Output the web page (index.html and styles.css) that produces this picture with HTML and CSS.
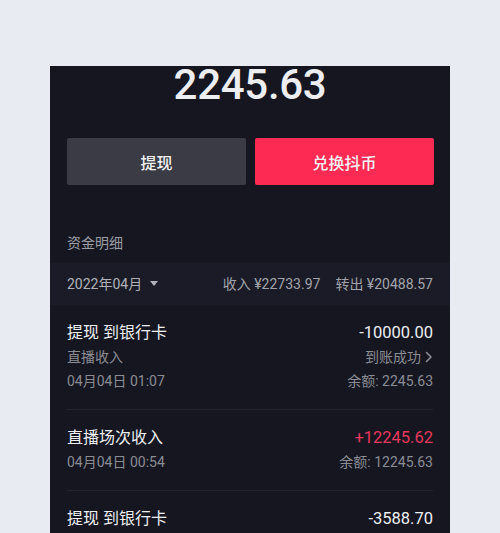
FILE: index.html
```html
<!DOCTYPE html>
<html lang="zh">
<head>
<meta charset="utf-8">
<link rel="stylesheet" href="styles.css">
</head>
<body>
<div class="panel">
  <div class="balance">2245.63</div>
  <div class="actions">
    <div class="btn btn-gray">提现</div>
    <div class="btn btn-red">兑换抖币</div>
  </div>
  <div class="section-title">资金明细</div>
  <div class="month-bar">
    <div class="month">2022年04月<span class="caret"></span></div>
    <div class="totals"><span>收入 ¥22733.97</span><span>转出 ¥20488.57</span></div>
  </div>
  <div class="item">
    <div class="col">
      <div class="title">提现 到银行卡</div>
      <div class="sub">直播收入</div>
      <div class="sub">04月04日 01:07</div>
    </div>
    <div class="col right">
      <div class="amount">-10000.00</div>
      <div class="sub status">到账成功<svg class="chev" width="8" height="12" viewBox="0 0 8 12"><path d="M1.5 1.5 L6 6 L1.5 10.5" fill="none" stroke="currentColor" stroke-width="1.6" stroke-linecap="round" stroke-linejoin="round"/></svg></div>
      <div class="sub">余额: 2245.63</div>
    </div>
  </div>
  <div class="item">
    <div class="col">
      <div class="title">直播场次收入</div>
      <div class="sub">04月04日 00:54</div>
    </div>
    <div class="col right">
      <div class="amount plus">+12245.62</div>
      <div class="sub">余额: 12245.63</div>
    </div>
  </div>
  <div class="item">
    <div class="col">
      <div class="title">提现 到银行卡</div>
    </div>
    <div class="col right">
      <div class="amount">-3588.70</div>
    </div>
  </div>
</div>
</body>
</html>
```
FILE: styles.css
```css
html, body {
  margin: 0;
  padding: 0;
}
body {
  background: #e8ebf2;
  font-family: Roboto, "Noto Sans CJK SC", sans-serif;
  height: 533px;
  overflow: hidden;
}
.panel {
  margin: 66px 0 0 50px;
  width: 400px;
  height: 467px;
  background: #151620;
}
.balance {
  text-align: center;
  font-size: 42px;
  line-height: 37px;
  font-weight: 500;
  color: #eceef2;
  letter-spacing: -0.3px;
}
.actions {
  display: flex;
  gap: 9px;
  padding: 0 16px 0 17px;
  margin-top: 35px;
}
.btn {
  flex: 1;
  height: 47px;
  border-radius: 2px;
  display: flex;
  align-items: center;
  justify-content: center;
  font-size: 16px;
  font-weight: 500;
  color: #f2f2f4;
}
.btn-gray { background: #3a3b45; }
.btn-red { background: #fd2b53; }
.section-title {
  margin-top: 48px;
  padding-left: 17px;
  font-size: 14px;
  line-height: 20px;
  color: #9c9da5;
}
.month-bar {
  margin-top: 10px;
  height: 40px;
  padding: 0 17px 2px;
  background: #1a1b26;
  display: flex;
  align-items: center;
  justify-content: space-between;
  font-size: 14px;
}
.month {
  color: #b1b2b9;
  display: flex;
  align-items: center;
}
.caret {
  margin-left: 8px;
  width: 0;
  height: 0;
  border-left: 4px solid transparent;
  border-right: 4px solid transparent;
  border-top: 5px solid #b1b2b9;
}
.totals {
  display: flex;
  gap: 15px;
  color: #a3a4ab;
}
.item {
  display: flex;
  justify-content: space-between;
  margin: 0 17px;
  padding: 16px 0;
  border-bottom: 1px solid #23242f;
}
.col {
  display: flex;
  flex-direction: column;
}
.col.right {
  align-items: flex-end;
}
.title {
  font-size: 16px;
  line-height: 24px;
  color: #eeeff2;
}
.amount {
  font-size: 16.5px;
  line-height: 24px;
  color: #eeeff2;
}
.amount.plus {
  color: #e8385e;
}
.sub {
  font-size: 14px;
  line-height: 24px;
  color: #8b8c94;
}
.status {
  display: flex;
  align-items: center;
  gap: 4px;
}
.chev {
  display: block;
}
```
